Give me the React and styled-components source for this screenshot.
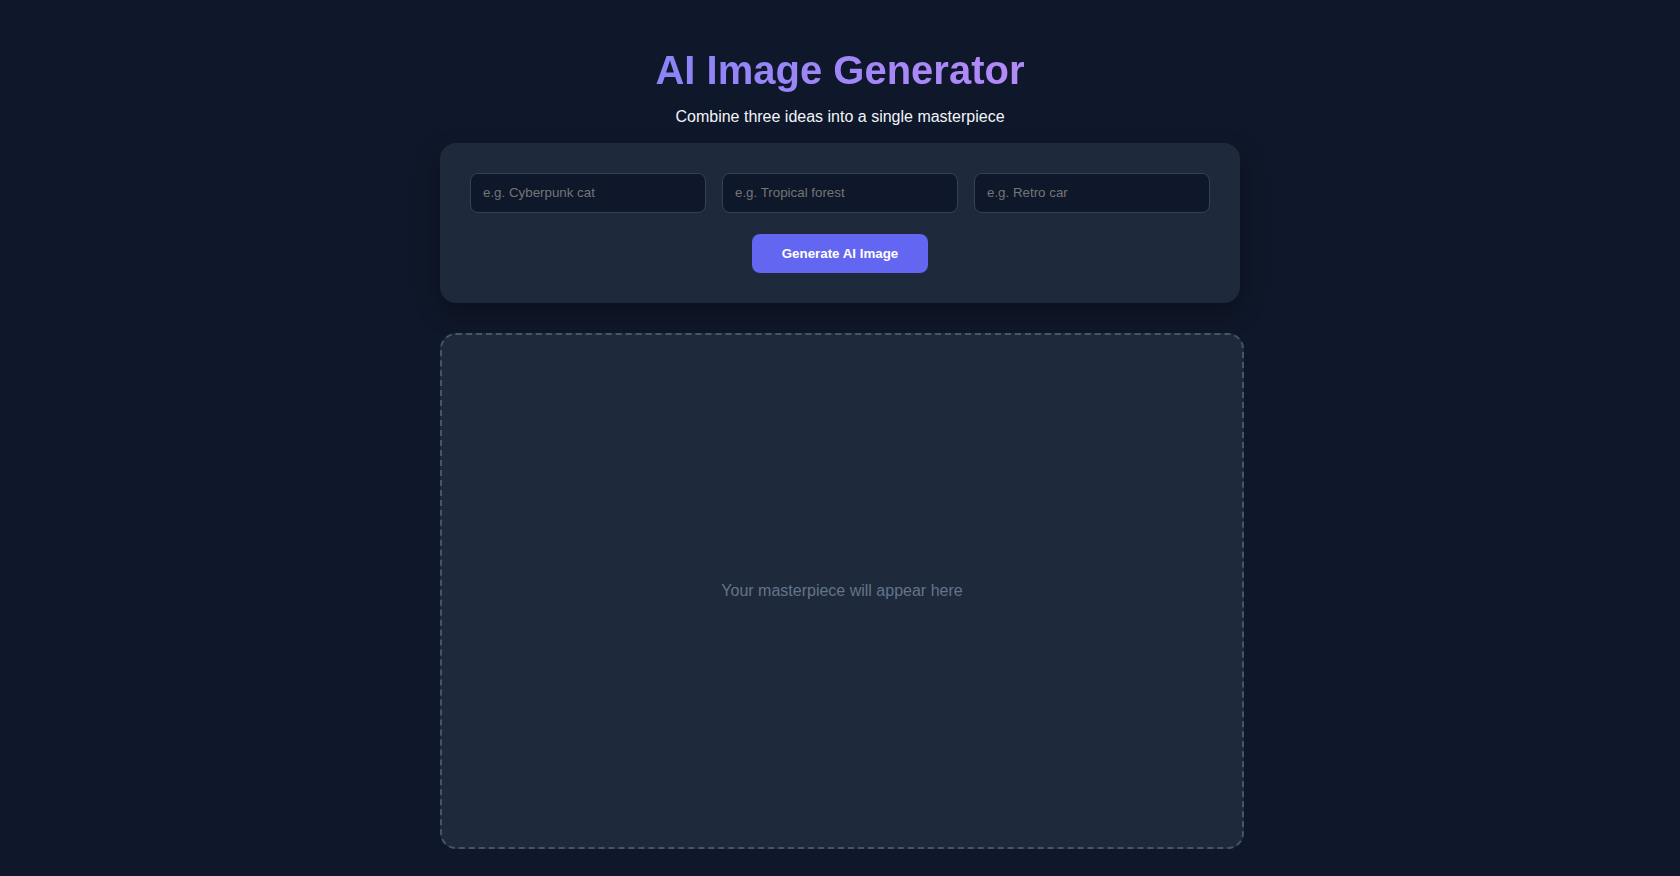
import React, { useState } from 'react';
import styled, { createGlobalStyle } from 'styled-components';

const GlobalStyle = createGlobalStyle`
  * {
    box-sizing: border-box;
  }

  body {
    margin: 0;
    background: #0f172a;
    color: #e2e8f0;
    font-family: "Liberation Sans", Arial, sans-serif;
  }
`;

const placeholders = ['e.g. Cyberpunk cat', 'e.g. Tropical forest', 'e.g. Retro car'];

export default function App() {
  const [ideas, setIdeas] = useState(['', '', '']);

  const update = (i, value) => {
    const next = [...ideas];
    next[i] = value;
    setIdeas(next);
  };

  return (
    <>
      <GlobalStyle />
      <Page>
        <Title>AI Image Generator</Title>
        <Subtitle>Combine three ideas into a single masterpiece</Subtitle>

        <Card>
          <InputRow>
            {placeholders.map((p, i) => (
              <IdeaInput
                key={p}
                type="text"
                placeholder={p}
                value={ideas[i]}
                onChange={e => update(i, e.target.value)}
              />
            ))}
          </InputRow>
          <GenerateButton type="button">Generate AI Image</GenerateButton>
        </Card>

        <Output>
          <Placeholder>Your masterpiece will appear here</Placeholder>
        </Output>
      </Page>
    </>
  );
}

const Page = styled.main`
  width: 800px;
  margin: 0 auto;
  padding: 48px 0 28px;
  display: flex;
  flex-direction: column;
  align-items: center;
`;

const Title = styled.h1`
  margin: 0 0 15px;
  font-size: 40px;
  font-weight: 700;
  line-height: normal;
  background: linear-gradient(90deg, #8b83f7, #b48af9);
  -webkit-background-clip: text;
  background-clip: text;
  color: transparent;
`;

const Subtitle = styled.p`
  margin: 0 0 17px;
  font-size: 16px;
  line-height: normal;
  color: #f1f5f9;
`;

const Card = styled.section`
  width: 100%;
  padding: 30px;
  background: #1e293b;
  border-radius: 16px;
  box-shadow: 0 10px 25px rgba(0, 0, 0, 0.3);
  display: flex;
  flex-direction: column;
  align-items: center;
`;

const InputRow = styled.div`
  width: 100%;
  display: grid;
  grid-template-columns: repeat(3, 1fr);
  gap: 16px;
  margin-bottom: 21px;
`;

const IdeaInput = styled.input`
  width: 100%;
  padding: 11px 12px 12px;
  font-family: "Liberation Sans", Arial, sans-serif;
  font-size: 13.333px;
  line-height: normal;
  color: #e2e8f0;
  background: #0f172a;
  border: 1px solid #334155;
  border-radius: 8px;
  outline: none;

  &::placeholder {
    color: #757575;
  }

  &:focus {
    border-color: #6366f1;
  }
`;

const GenerateButton = styled.button`
  padding: 12px 30px;
  font-family: "Liberation Sans", Arial, sans-serif;
  font-size: 13.333px;
  font-weight: 700;
  line-height: normal;
  color: #ffffff;
  background: #6366f1;
  border: none;
  border-radius: 8px;
  cursor: pointer;
`;

const Output = styled.div`
  box-sizing: content-box;
  align-self: flex-start;
  width: 100%;
  height: 512px;
  margin-top: 30px;
  background: #1e293b;
  border: 2px dashed #475569;
  border-radius: 16px;
  display: flex;
  align-items: center;
  justify-content: center;
`;

const Placeholder = styled.p`
  margin: 0;
  font-size: 16px;
  color: #64748b;
`;
